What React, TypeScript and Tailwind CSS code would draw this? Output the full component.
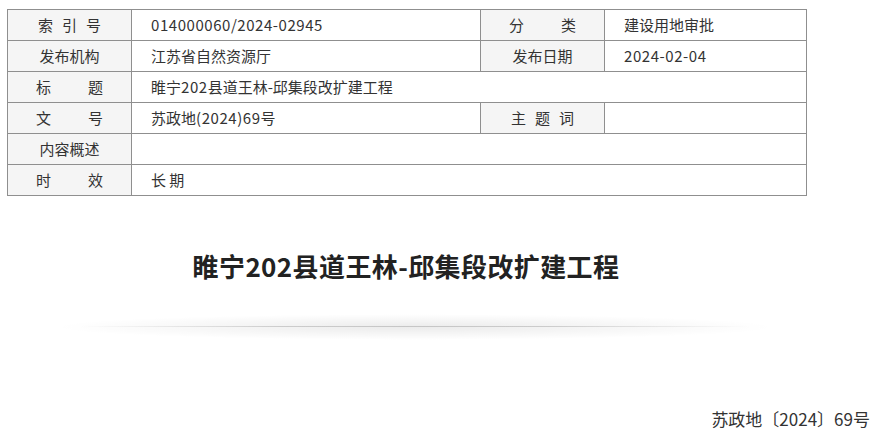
const font = { fontFamily: '"Noto Sans CJK SC", "Noto Sans", sans-serif' };

function Label({ text, gap = 0 }: { text: string; gap?: number }) {
  // spacing between characters mimics the justified labels in the source table
  return (
    <span className="inline-flex justify-center">
      {text.split("").map((ch, i) => (
        <span key={i} style={{ marginLeft: i === 0 ? 0 : gap }}>
          {ch}
        </span>
      ))}
    </span>
  );
}

const th = "border border-[#8f8f8f] bg-[#f5f5f5] text-center p-0 font-normal";
const td = "border border-[#8f8f8f] bg-white pl-[19px] p-0 text-left";

export default function App() {
  return (
    <div className="w-[882px] h-[439px] bg-white text-[#333] overflow-hidden" style={font}>
      <div className="pt-[9px] pl-[7px]">
        <table className="w-[800px] table-fixed border-collapse text-[15px] leading-[30px]">
          <colgroup>
            <col className="w-[124px]" />
            <col className="w-[349px]" />
            <col className="w-[124px]" />
            <col className="w-[202px]" />
          </colgroup>
          <tbody>
            <tr className="h-[31px]">
              <th className={th}><Label text="索引号" gap={9} /></th>
              <td className={td}><span className="tracking-[0.55px]">014000060/2024-02945</span></td>
              <th className={th}><Label text="分类" gap={37} /></th>
              <td className={td}>建设用地审批</td>
            </tr>
            <tr className="h-[31px]">
              <th className={th}><Label text="发布机构" /></th>
              <td className={td}>江苏省自然资源厅</td>
              <th className={th}><Label text="发布日期" /></th>
              <td className={td}><span className="tracking-[0.55px]">2024-02-04</span></td>
            </tr>
            <tr className="h-[31px]">
              <th className={th}><Label text="标题" gap={37} /></th>
              <td className={td} colSpan={3}>
                睢宁<span className="tracking-[0.55px]">202</span>县道王林-邱集段改扩建工程
              </td>
            </tr>
            <tr className="h-[31px]">
              <th className={th}><Label text="文号" gap={37} /></th>
              <td className={td}>
                苏政地<span className="tracking-[0.55px]">(2024)69</span>号
              </td>
              <th className={th}><Label text="主题词" gap={9} /></th>
              <td className={td}></td>
            </tr>
            <tr className="h-[31px]">
              <th className={th}><Label text="内容概述" /></th>
              <td className={td} colSpan={3}></td>
            </tr>
            <tr className="h-[31px]">
              <th className={th}><Label text="时效" gap={37} /></th>
              <td className={td} colSpan={3}>长 期</td>
            </tr>
          </tbody>
        </table>
      </div>

      <div className="w-[812px] mt-[52px] flex flex-col items-center">
        <h1 className="text-[26px] font-bold leading-[36px] text-[#222] tracking-[0.4px]">
          睢宁202县道王林-邱集段改扩建工程
        </h1>
        <div className="relative mt-[30px] w-[730px] h-[26px] ml-[18px]">
          <div className="absolute inset-0 bg-[radial-gradient(ellipse_at_center,rgba(0,0,0,0.08),rgba(0,0,0,0)_70%)]" />
          <div className="absolute left-[30px] right-[30px] top-[12px] h-px bg-[linear-gradient(to_right,rgba(0,0,0,0),rgba(0,0,0,0.16)_30%,rgba(0,0,0,0.16)_70%,rgba(0,0,0,0))]" />
        </div>
      </div>

      <div className="mt-[67px] pr-[12px] flex justify-end text-[17px] leading-[24px] text-[#333]">
        苏政地〔2024〕69号
      </div>
    </div>
  );
}
